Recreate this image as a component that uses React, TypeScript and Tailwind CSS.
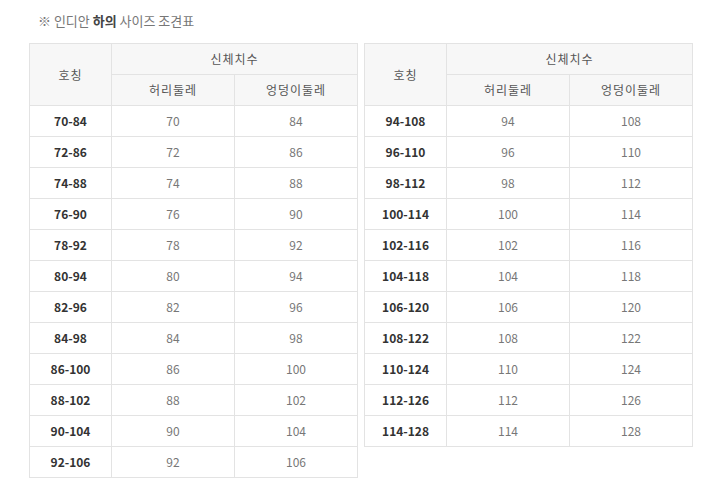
import React from 'react';

const left: [string, number, number][] = [
  ['70-84', 70, 84],
  ['72-86', 72, 86],
  ['74-88', 74, 88],
  ['76-90', 76, 90],
  ['78-92', 78, 92],
  ['80-94', 80, 94],
  ['82-96', 82, 96],
  ['84-98', 84, 98],
  ['86-100', 86, 100],
  ['88-102', 88, 102],
  ['90-104', 90, 104],
  ['92-106', 92, 106],
];

const right: [string, number, number][] = [
  ['94-108', 94, 108],
  ['96-110', 96, 110],
  ['98-112', 98, 112],
  ['100-114', 100, 114],
  ['102-116', 102, 116],
  ['104-118', 104, 118],
  ['106-120', 106, 120],
  ['108-122', 108, 122],
  ['110-124', 110, 124],
  ['112-126', 112, 126],
  ['114-128', 114, 128],
];

function SizeTable({ rows }: { rows: [string, number, number][] }) {
  const th = 'border border-[#e3e3e3] bg-[#f7f7f7] font-normal text-[#555] text-[12px] tracking-[1px]';
  return (
    <table className="border-collapse w-[328px] table-fixed">
      <colgroup>
        <col className="w-[82px]" />
        <col className="w-[123px]" />
        <col className="w-[123px]" />
      </colgroup>
      <thead>
        <tr className="h-[31px]">
          <th rowSpan={2} className={th}>호칭</th>
          <th colSpan={2} className={th}>신체치수</th>
        </tr>
        <tr className="h-[31px]">
          <th className={th}>허리둘레</th>
          <th className={th}>엉덩이둘레</th>
        </tr>
      </thead>
      <tbody>
        {rows.map(([name, waist, hip]) => (
          <tr key={name} className="h-[31px]">
            <td className="border border-[#e3e3e3] text-center text-[12px] font-bold text-[#333]">{name}</td>
            <td className="border border-[#e3e3e3] text-center text-[12px] text-[#777]">{waist}</td>
            <td className="border border-[#e3e3e3] text-center text-[12px] text-[#777]">{hip}</td>
          </tr>
        ))}
      </tbody>
    </table>
  );
}

export default function App() {
  return (
    <div
      className="w-[719px] h-[493px] bg-white pl-[29px] pt-[11px]"
      style={{ fontFamily: '"Noto Sans CJK KR", "Liberation Sans", sans-serif' }}
    >
      <div className="pl-[9px] h-[32px] text-[13px] leading-[20px] text-[#777]">
        ※ 인디안 <b className="text-[#444]">하의</b> 사이즈 조견표
      </div>
      <div className="flex items-start gap-[6px]">
        <SizeTable rows={left} />
        <SizeTable rows={right} />
      </div>
    </div>
  );
}
